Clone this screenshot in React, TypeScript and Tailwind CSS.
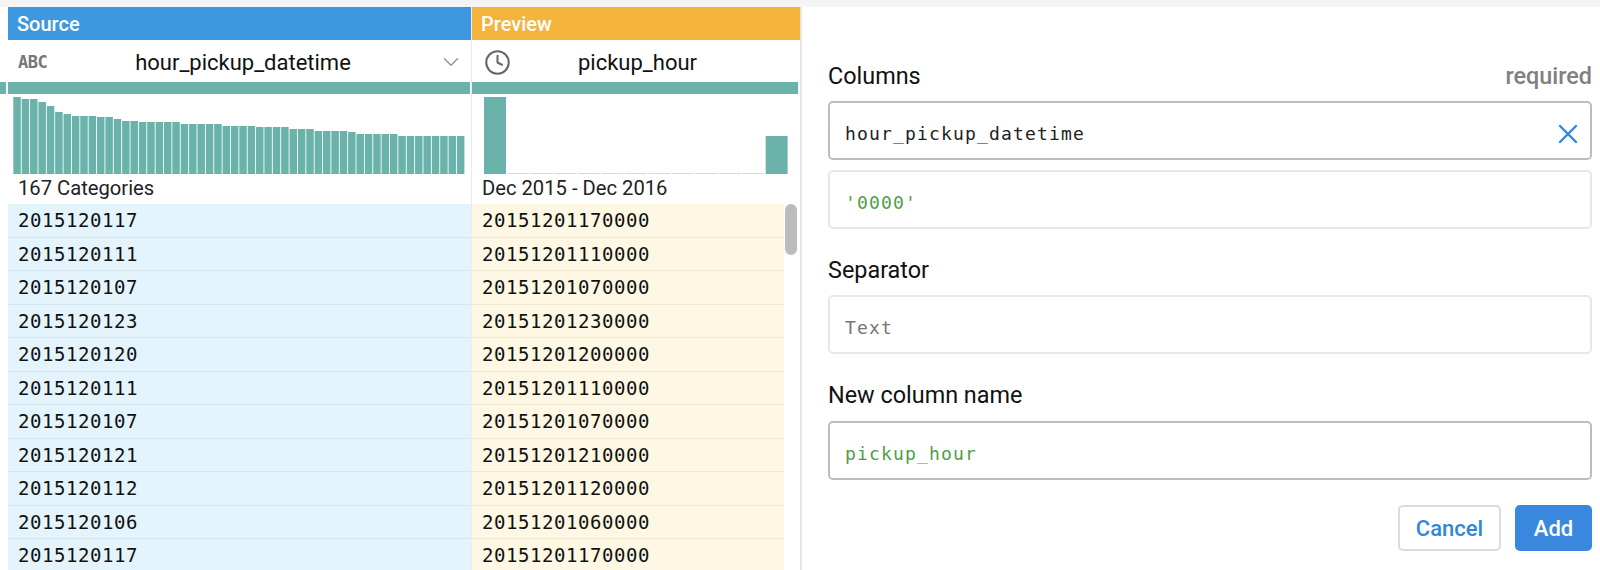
import { ChevronDown, Clock, X } from "lucide-react";

const sourceRows = ["2015120117", "2015120111", "2015120107", "2015120123", "2015120120", "2015120111", "2015120107", "2015120121", "2015120112", "2015120106", "2015120117"];

// bar heights in px, read off the histogram
const sourceBars = [77, 75, 75, 72, 68, 62, 60, 58, 58, 58, 57, 57, 55, 53, 53, 52, 52, 52, 52, 52, 50, 50, 50, 50, 50, 48, 48, 48, 48, 47, 47, 47, 47, 45, 45, 45, 43, 43, 43, 43, 42, 40, 40, 40, 40, 40, 38, 38, 38, 38, 38, 38, 38, 38];
const previewBars = [77, 1, 1, 1, 1, 1, 1, 1, 1, 1, 1, 1, 38];

const TEAL = "#6bb3aa";

function SourceChart() {
  return (
    <svg width="452" height="80" className="block">
      {sourceBars.map((h, i) => (
        <rect key={i} x={i * 8.37 + 0.3} y={80 - h} width={7.5} height={h} fill={TEAL} />
      ))}
    </svg>
  );
}

function PreviewChart() {
  return (
    <svg width="306" height="80" className="block">
      {previewBars.map((h, i) => (
        <rect key={i} x={i * 23.47} y={80 - h} width={22} height={h} fill={h < 2 ? "#c5e2de" : TEAL} />
      ))}
    </svg>
  );
}

function Field({ value, className, borderClass, children }: { value: string; className: string; borderClass: string; children?: React.ReactNode }) {
  return (
    <div className={`flex h-[59px] items-center justify-between rounded-[5px] border-2 bg-white pl-[15px] pr-[6px] pt-[6px] ${borderClass}`}>
      <span className={`font-['DejaVu_Sans_Mono',monospace] text-[18px] tracking-[1.16px] ${className}`}>{value}</span>
      {children}
    </div>
  );
}

export default function App() {
  return (
    <div className="flex h-[570px] w-[1600px] flex-col overflow-hidden bg-white font-['Roboto',sans-serif]">
      <div className="h-[7px] shrink-0 bg-[#f4f4f4]" />
      <div className="flex min-h-0 flex-1">
        {/* table side */}
        <div className="flex w-[802px] shrink-0 border-r-2 border-[#e6e6e6]">
          <div className="w-[8px] shrink-0">
            <div className="mt-[75px] h-[12px] w-[6px] bg-[#6bb3aa]" />
          </div>

          {/* source column */}
          <div className="flex w-[464px] shrink-0 flex-col border-r border-[#e8eef0]">
            <div className="flex h-[33px] shrink-0 items-center bg-[#3d98e0] pl-[9px] text-[20px] font-medium text-white">Source</div>
            <div className="flex h-[42px] shrink-0 items-center pl-[10px] pr-[7px] pt-[2px]">
              <span className="w-[30px] font-['DejaVu_Sans_Mono',monospace] text-[17px] font-bold leading-none tracking-[-0.5px] text-[#777]">ABC</span>
              <span className="flex-1 text-center text-[22px] text-[#111]">hour_pickup_datetime</span>
              <ChevronDown size={26} strokeWidth={1.5} className="text-[#999]" />
            </div>
            <div className="mr-px h-[12px] shrink-0 bg-[#6bb3aa]" />
            <div className="shrink-0 pl-[5px]">
              <SourceChart />
            </div>
            <div className="flex h-[30px] shrink-0 items-center pb-[2px] pl-[10px] text-[20.2px] text-[#222]">167 Categories</div>
            {sourceRows.map((v, i) => (
              <div key={i} className="flex h-[33.5px] shrink-0 items-center border-b border-[#d6e6ee] bg-[#e3f4fd] pl-[10px] font-['DejaVu_Sans_Mono',monospace] text-[19px] tracking-[0.56px] text-[#111]">
                {v}
              </div>
            ))}
          </div>

          {/* preview column */}
          <div className="relative flex flex-1 flex-col">
            <div className="flex h-[33px] shrink-0 items-center bg-[#f6b33c] pl-[9px] text-[20px] font-medium text-white">Preview</div>
            <div className="flex h-[42px] shrink-0 items-center pl-[12px] pr-[36px] pt-[2px]">
              <Clock size={27} strokeWidth={1.8} className="text-[#666]" />
              <span className="flex-1 text-center text-[22px] text-[#111]">pickup_hour</span>
            </div>
            <div className="mr-[2px] h-[12px] shrink-0 bg-[#6bb3aa]" />
            <div className="shrink-0 pl-[12px]">
              <PreviewChart />
            </div>
            <div className="flex h-[30px] shrink-0 items-center pb-[2px] pl-[10px] text-[20.2px] text-[#222]">Dec 2015 - Dec 2016</div>
            {sourceRows.map((v, i) => (
              <div key={i} className="mr-[16px] flex h-[33.5px] shrink-0 items-center border-b border-[#efe8d2] bg-[#fef7e3] pl-[10px] font-['DejaVu_Sans_Mono',monospace] text-[19px] tracking-[0.56px] text-[#111]">
                {v + "0000"}
              </div>
            ))}
            {/* scrollbar thumb */}
            <div className="absolute right-[3px] top-[197px] h-[51px] w-[12px] rounded-full bg-[#bcbcbc]" />
          </div>
        </div>

        {/* form side */}
        <div className="flex flex-1 flex-col pl-[26px] pr-[8px]">
          <div className="mt-[55px] flex h-[30px] items-center justify-between text-[23.4px]">
            <span className="text-[#111]">Columns</span>
            <span className="font-medium text-[#808080]">required</span>
          </div>
          <div className="mt-[9px]">
            <Field value="hour_pickup_datetime" className="text-[#222]" borderClass="border-[#bdbdbd]">
              <X size={32} strokeWidth={1.8} className="text-[#2f87dc]" />
            </Field>
          </div>
          <div className="mt-[10px]">
            <Field value="'0000'" className="text-[#4f9e47]" borderClass="border-[#e8e8e8]" />
          </div>
          <div className="mt-[27px] flex h-[30px] items-center text-[23.4px] text-[#111]">Separator</div>
          <div className="mt-[9px]">
            <Field value="Text" className="text-[#757575]" borderClass="border-[#e8e8e8]" />
          </div>
          <div className="mt-[27px] flex h-[30px] items-center text-[23.4px] text-[#111]">New column name</div>
          <div className="mt-[10px]">
            <Field value="pickup_hour" className="text-[#4f9e47]" borderClass="border-[#bdbdbd]" />
          </div>
          <div className="mt-[25px] flex justify-end gap-[14px]">
            <button className="h-[46px] w-[103px] rounded-[5px] border-2 border-[#dcdcdc] bg-white text-[22px] font-medium text-[#2f87dc]">Cancel</button>
            <button className="h-[46px] w-[77px] rounded-[5px] bg-[#3a88dd] text-[22px] font-medium text-white">Add</button>
          </div>
        </div>
      </div>
    </div>
  );
}
